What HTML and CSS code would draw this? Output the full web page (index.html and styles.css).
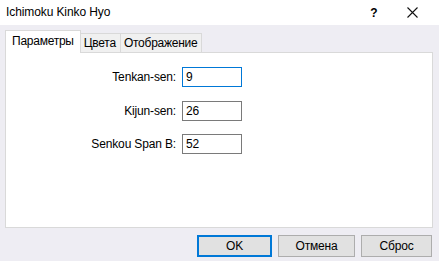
FILE: index.html
```html
<!DOCTYPE html>
<html>
<head>
<meta charset="utf-8">
<link rel="stylesheet" href="styles.css">
</head>
<body>
<div class="dialog">
  <div class="titlebar">
    <span class="title">Ichimoku Kinko Hyo</span>
    <span class="help">?</span>
    <span class="close"><svg width="11" height="11" viewBox="0 0 11 11"><path d="M0.5 0.5 L10.5 10.5 M10.5 0.5 L0.5 10.5" stroke="#111" stroke-width="1.1" fill="none"/></svg></span>
  </div>
  <div class="body">
    <div class="tabs">
      <div class="tab active">Параметры</div>
      <div class="tab">Цвета</div>
      <div class="tab">Отображение</div>
    </div>
    <div class="panel">
      <div class="form">
        <label class="lbl">Tenkan-sen:</label>
        <div class="inp focus">9</div>
        <label class="lbl">Kijun-sen:</label>
        <div class="inp">26</div>
        <label class="lbl">Senkou Span B:</label>
        <div class="inp">52</div>
      </div>
    </div>
    <div class="buttons">
      <div class="btn default">OK</div>
      <div class="btn wide">Отмена</div>
      <div class="btn narrow">Сброс</div>
    </div>
  </div>
</div>
</body>
</html>
```
FILE: styles.css
```css
html, body {
  margin: 0;
  padding: 0;
}
body {
  width: 439px;
  height: 261px;
  overflow: hidden;
  background: #eeedf3;
  font-family: "Liberation Sans", Arial, sans-serif;
  font-size: 12px;
  color: #000;
}
.dialog {
  width: 439px;
  height: 261px;
  display: flex;
  flex-direction: column;
}
.titlebar {
  height: 25px;
  background: #fff;
  display: flex;
  align-items: center;
  padding-left: 6px;
}
.title {
  font-size: 12px;
  flex: 1;
  padding-bottom: 1px;
  letter-spacing: -0.1px;
}
.help {
  width: 20px;
  text-align: center;
  font-weight: bold;
  font-size: 12px;
  margin-right: 23px;
}
.close {
  width: 11px;
  height: 11px;
  margin-right: 21px;
  display: flex;
}
.body {
  padding: 6px 6px 0 5px;
  display: flex;
  flex-direction: column;
}
.tabs {
  display: flex;
  align-items: flex-end;
  height: 21px;
  position: relative;
  z-index: 1;
  letter-spacing: -0.25px;
}
.tab {
  height: 18px;
  line-height: 18px;
  padding: 0 4px 0 3px;
  border: 1px solid #d9d9d9;
  border-bottom: none;
  background: #f0f0f0;
  margin-left: -1px;
}
.tab.active {
  height: 22px;
  line-height: 21px;
  background: #fff;
  margin-left: 0;
  padding: 0 6px 0 6px;
  margin-bottom: -1px;
}
.panel {
  height: 174px;
  background: #fff;
  border: 1px solid #d9d9d9;
}
.form {
  display: grid;
  grid-template-columns: 170px 60px;
  grid-auto-rows: 20px;
  column-gap: 6px;
  row-gap: 13.5px;
  padding-top: 14px;
  align-items: center;
  letter-spacing: -0.15px;
}
.lbl {
  text-align: right;
}
.inp {
  height: 20px;
  box-sizing: border-box;
  border: 1px solid #7a7a7a;
  line-height: 18px;
  padding-left: 3px;
}
.inp.focus {
  border-color: #0078d7;
}
.buttons {
  display: flex;
  justify-content: flex-end;
  gap: 6px;
  margin-top: 7px;
  padding-right: 1px;
}
.btn {
  width: 75px;
  height: 22px;
  box-sizing: border-box;
  border: 1px solid #adadad;
  background: #e1e1e1;
  text-align: center;
  line-height: 20px;
  letter-spacing: -0.2px;
}
.btn.wide {
  width: 77px;
}
.btn.narrow {
  width: 71px;
}
.btn.default {
  border: 2px solid #0078d7;
  line-height: 18px;
}
```
